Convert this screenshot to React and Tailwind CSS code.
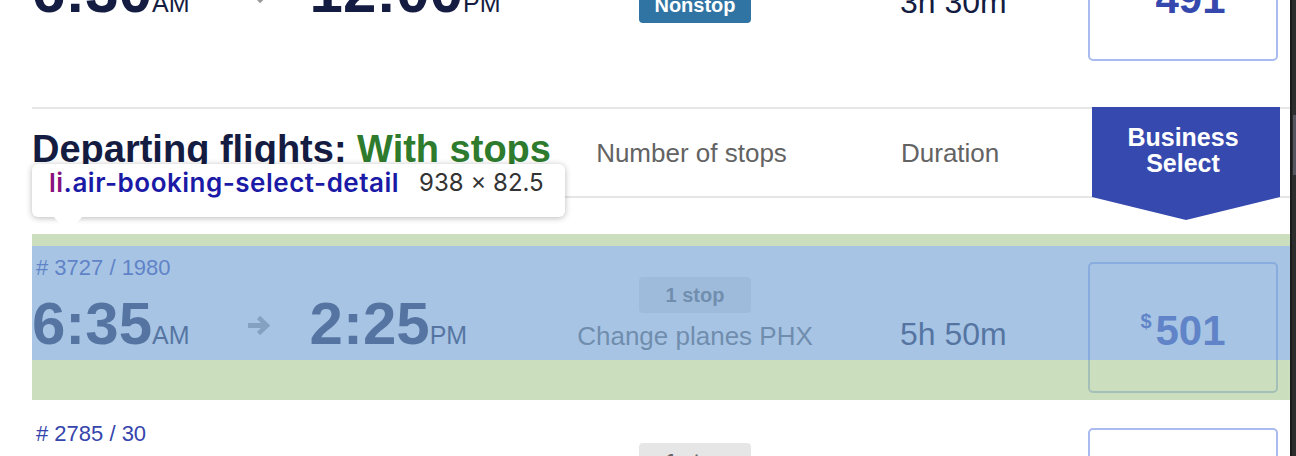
import React from "react";

function Arrow() {
  return (
    <svg width="23" height="21" viewBox="0 0 23 21" className="shrink-0 ml-[58px] mr-[39px] relative -top-[8px] text-[#9a9a9a]">
      <path d="M0 10.5H19" stroke="currentColor" strokeWidth="5" />
      <path d="M10.5 2.5L19 10.5L10.5 18.5" stroke="currentColor" strokeWidth="4.5" fill="none" />
    </svg>
  );
}

function FlightRow({ num, dep, depAp, arr, arrAp, stops, change, duration, price, className = "" }) {
  const nonstop = !change;
  return (
    <li className={`flex h-[166px] pt-[12px] shrink-0 ${className}`}>
      <div className="w-[538px] flex flex-col">
        <div className="mt-[10px] pl-[4px] h-[24px] text-[22px] leading-[24px] text-[#3545ab] whitespace-nowrap">{num}</div>
        <div className="mt-[14px] flex items-baseline leading-[60px] text-[#141c42] whitespace-nowrap">
          <span className="text-[60px] font-bold">{dep}</span>
          <span className="text-[25px]">{depAp}</span>
          <Arrow />
          <span className="text-[60px] font-bold">{arr}</span>
          <span className="text-[25px]">{arrAp}</span>
        </div>
      </div>

      <div className="w-[250px] flex flex-col items-center">
        <div
          className={`w-[112px] h-[36px] rounded-[4px] text-[20px] font-bold leading-[36px] text-center ${
            nonstop ? "mt-[73px] bg-[#2f74a3] text-white" : "mt-[31px] bg-[#e6e6e6] text-[#666666]"
          }`}
        >
          {stops}
        </div>
        {change && (
          <div className="mt-[8px] text-[26px] leading-[30px] text-[#636363] whitespace-nowrap">{change}</div>
        )}
      </div>

      <div className="w-[268px] pl-[80px]">
        <div className="mt-[70px] text-[32px] leading-[36px] text-[#141c42] whitespace-nowrap">{duration}</div>
      </div>

      <div className="w-[190px]">
        <div className="mt-[16px] h-[131px] rounded-[5px] border-2 border-[#a9bbef] flex justify-center items-start pt-[46px] text-[#3548ad] font-bold">
          <span className="text-[20px] leading-none mr-[4px] mt-[1px]">$</span>
          <span className="text-[42px] leading-none">{price}</span>
        </div>
      </div>
    </li>
  );
}

export default function App() {
  return (
    <div className="relative h-[456px] w-[1296px] overflow-hidden bg-white flex [font-family:'Liberation_Sans',Arial,sans-serif]">
      <div className="w-[1290px] pl-[32px] flex flex-col">
        <ul className="flex flex-col">
          <FlightRow
            className="-mt-[98px]"
            num="# 1521"
            dep="6:30"
            depAp="AM"
            arr="12:00"
            arrAp="PM"
            stops="Nonstop"
            duration="3h 30m"
            price="491"
          />
        </ul>

        <div className="mt-[39px] mb-[36px] h-[91px] shrink-0 border-y-2 border-[#e6e6e6] flex">
          <div className="flex items-baseline pt-[18px]">
            <h2 className="w-[538px] text-[38px] leading-[44px] font-bold text-[#141c42] whitespace-nowrap">
              Departing flights: <span className="text-[#2e7b2e]">With stops</span>
            </h2>
            <div className="w-[250px] pr-[7px] text-center text-[26px] text-[#636363] whitespace-nowrap">Number of stops</div>
            <div className="w-[268px] pl-[81px] text-[26px] text-[#636363]">Duration</div>
          </div>
          <div className="ml-[4px] -mt-[2px] w-[188px] h-[113px] shrink-0 bg-[#3649ae] [clip-path:polygon(0_0,100%_0,100%_79.6%,50%_100%,0_79.6%)] pt-[17px] pr-[6px] text-center text-white font-bold text-[25px] leading-[26px]">
            Business
            <br />
            Select
          </div>
        </div>

        <ul className="flex flex-col">
          <FlightRow
            num="# 3727 / 1980"
            dep="6:35"
            depAp="AM"
            arr="2:25"
            arrAp="PM"
            stops="1 stop"
            change="Change planes PHX"
            duration="5h 50m"
            price="501"
          />
          <FlightRow
            num="# 2785 / 30"
            dep="7:10"
            depAp="AM"
            arr="3:05"
            arrAp="PM"
            stops="1 stop"
            change="Change planes DEN"
            duration="5h 55m"
            price="501"
          />
        </ul>
      </div>

      {/* scrollbar strip */}
      <div className="w-[6px] h-full bg-[#2d2d2d] border-l-2 border-[#1c1c1c] flex flex-col">
        <div className="mt-[115px] ml-[1px] h-[60px] w-[3px] bg-[#55555f]" />
      </div>

      {/* devtools element highlight */}
      <div className="absolute left-[32px] top-[234px] w-[1258px] flex flex-col pointer-events-none">
        <div className="h-[12px] bg-[rgba(160,195,137,0.55)]" />
        <div className="h-[114px] bg-[rgba(120,164,213,0.65)]" />
        <div className="h-[40px] bg-[rgba(160,195,137,0.55)]" />
      </div>

      {/* devtools tooltip */}
      <div className="absolute left-[32px] top-[164px] w-[533px] h-[53px] bg-white rounded-[6px] shadow-[0_1px_6px_rgba(0,0,0,0.28)] pl-[17px] pt-[4px] flex items-start leading-[30px] [font-family:Inter,'Noto_Sans',sans-serif] whitespace-nowrap">
        <span className="font-semibold text-[26px] tracking-[0.5px]">
          <span className="text-[#881280]">li</span>
          <span className="text-[#1a1aa6]">.air-booking-select-detail</span>
        </span>
        <span className="ml-[20px] text-[24px] text-[#333333]">938 × 82.5</span>
        <div className="absolute left-[22px] top-[53px] w-0 h-0 border-l-[14px] border-r-[14px] border-t-[16px] border-l-transparent border-r-transparent border-t-white" />
      </div>
    </div>
  );
}
